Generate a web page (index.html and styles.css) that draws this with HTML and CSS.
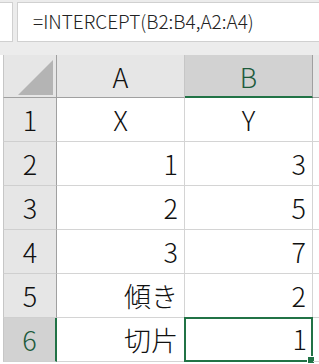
FILE: index.html
```html
<!DOCTYPE html>
<html lang="ja">
<head>
    <meta charset="UTF-8">
    <title>INTERCEPT</title>
    <link rel="stylesheet" href="styles.css">
</head>
<body>
    <div class="formula-bar">
        <div class="name-box"></div>
        <div class="formula">=INTERCEPT(B2:B4,A2:A4)</div>
    </div>

    <div class="sheet">
        <div class="corner"><span class="tri"></span></div>
        <div class="col-head">A</div>
        <div class="col-head active">B</div>
        <div class="col-head rest"></div>

        <div class="row-head">1</div>
        <div class="cell center">X</div>
        <div class="cell center">Y</div>
        <div class="cell rest"></div>

        <div class="row-head">2</div>
        <div class="cell">1</div>
        <div class="cell">3</div>
        <div class="cell rest"></div>

        <div class="row-head">3</div>
        <div class="cell">2</div>
        <div class="cell">5</div>
        <div class="cell rest"></div>

        <div class="row-head">4</div>
        <div class="cell">3</div>
        <div class="cell">7</div>
        <div class="cell rest"></div>

        <div class="row-head">5</div>
        <div class="cell">傾き</div>
        <div class="cell">2</div>
        <div class="cell rest"></div>

        <div class="row-head active">6</div>
        <div class="cell">切片</div>
        <div class="cell selected">1<span class="handle"></span></div>
        <div class="cell rest"></div>
    </div>
</body>
</html>
```

FILE: styles.css
```css
body {
    margin: 0;
    width: 319px;
    height: 364px;
    overflow: hidden;
    background: #fff;
    font-family: "Noto Sans CJK JP", "Noto Sans", sans-serif;
    font-weight: 300;
}
.formula-bar {
    display: flex;
    gap: 4px;
    height: 55px;
    padding-top: 2px;
    box-sizing: border-box;
    background: #ececec;
}
.name-box {
    width: 14px;
    height: 40px;
    margin-left: -1px;
    background: #fff;
    border: 1px solid #d0d0d0;
    box-sizing: border-box;
}
.formula {
    flex: 1;
    height: 40px;
    margin-right: -2px;
    background: #fff;
    border: 1px solid #d0d0d0;
    box-sizing: border-box;
    padding-left: 15px;
    font-size: 19px;
    line-height: 36px;
    color: #222;
}
.sheet {
    display: grid;
    grid-template-columns: 57px 128px 128px 20px;
    grid-template-rows: 43px repeat(6, 44px);
    font-size: 27px;
    color: #111;
}
.corner {
    position: relative;
    background: #e6e6e6;
    border-left: 1px solid #c6c6c6;
    margin-left: 3px;
    border-right: 1px solid #a0a0a0;
    border-bottom: 1px solid #a0a0a0;
}
.tri {
    position: absolute;
    right: 3px;
    bottom: 2px;
    width: 0;
    height: 0;
    border-left: 35px solid transparent;
    border-bottom: 35px solid #b4b4b4;
}
.col-head {
    background: #e6e6e6;
    border-right: 1px solid #c6c6c6;
    border-bottom: 1px solid #a0a0a0;
    text-align: center;
    line-height: 44px;
}
.col-head.active {
    background: #d2d2d2;
    color: #1d5b3c;
    border-right-color: #a0a0a0;
    border-bottom: 2px solid #217346;
}
.col-head.rest {
    border-right: none;
}
.row-head {
    background: #e6e6e6;
    margin-left: 3px;
    border-left: 1px solid #c6c6c6;
    border-right: 1px solid #a0a0a0;
    border-bottom: 1px solid #cfcfcf;
    text-align: center;
    line-height: 44px;
}
.row-head.active {
    background: #d2d2d2;
    color: #1d5b3c;
    border-right: 2px solid #217346;
}
.cell {
    position: relative;
    border-right: 1px solid #d4d4d4;
    border-bottom: 1px solid #d4d4d4;
    text-align: right;
    padding-right: 6px;
    line-height: 44px;
}
.cell.center {
    text-align: center;
    padding-right: 0;
}
.cell.rest {
    border-right: none;
    padding: 0;
}
.cell.selected {
    border: 2px solid #217346;
    margin-left: -1px;
    margin-top: -1px;
    line-height: 40px;
    padding-right: 4px;
}
.handle {
    position: absolute;
    right: -4px;
    bottom: -4px;
    width: 6px;
    height: 6px;
    background: #217346;
    border: 1px solid #fff;
}
```
